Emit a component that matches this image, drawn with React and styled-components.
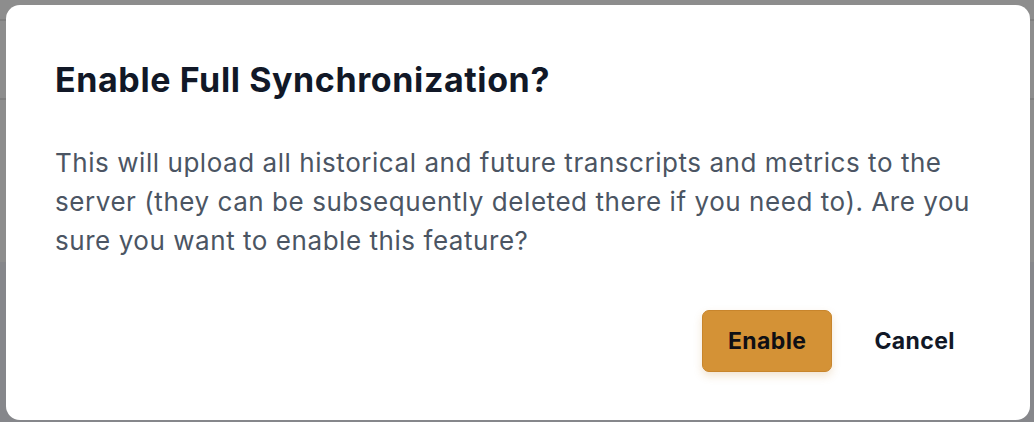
import React from 'react';
import styled, { createGlobalStyle } from 'styled-components';

const GlobalStyle = createGlobalStyle`
  html, body {
    margin: 0;
    padding: 0;
    width: 1034px;
    height: 422px;
    overflow: hidden;
    font-family: Inter, "Noto Sans", "Liberation Sans", sans-serif;
  }
`;

const Screen = styled.div`
  position: relative;
  width: 1034px;
  height: 422px;
  background: #8d8d8d;
  overflow: hidden;
`;

// faint app shapes visible behind the overlay
const BackdropApp = styled.div`
  position: absolute;
  inset: 0;
  display: flex;
  flex-direction: column;
`;

const BackdropBar = styled.div`
  height: ${props => props.h}px;
  border-bottom: 2px solid #7f7f7f;
  flex-shrink: 0;
`;

const BackdropFoot = styled.div`
  margin-top: auto;
  height: 160px;
  background: #86878b;
`;

const Dialog = styled.div`
  position: absolute;
  left: 6px;
  top: 5px;
  width: 1024px;
  height: 415px;
  box-sizing: border-box;
  background: #ffffff;
  border-radius: 14px;
  padding: 54px 49px 0 49px;
  display: flex;
  flex-direction: column;
`;

const Title = styled.h2`
  margin: 0;
  font-size: 34px;
  line-height: 42px;
  font-weight: 700;
  color: #111827;
  letter-spacing: 0.6px;
`;

const Body = styled.p`
  margin: 42px 0 0;
  font-size: 26px;
  line-height: 39px;
  font-weight: 400;
  color: #4b5563;
  letter-spacing: 0.55px;
  max-width: 945px;
`;

const Actions = styled.div`
  display: flex;
  justify-content: flex-end;
  align-items: center;
  gap: 16px;
  margin-top: 50px;
`;

const Button = styled.button`
  font-family: inherit;
  font-size: 23px;
  font-weight: 700;
  letter-spacing: 0.4px;
  height: 62px;
  padding: 0 25px;
  border-radius: 7px;
  cursor: pointer;
  color: ${props => (props.primary ? '#0f0f14' : '#111827')};
  background: ${props => (props.primary ? '#d49236' : 'transparent')};
  border: 1px solid ${props => (props.primary ? '#c8852c' : 'transparent')};
  box-shadow: ${props => (props.primary ? '0 4px 8px rgba(190, 130, 50, 0.22)' : 'none')};
`;

export default function App() {
  return (
    <Screen>
      <GlobalStyle />
      <BackdropApp>
        <BackdropBar h={19} />
        <BackdropBar h={77} />
        <BackdropFoot />
      </BackdropApp>
      <Dialog role="dialog" aria-modal="true">
        <Title>Enable Full Synchronization?</Title>
        <Body>
          This will upload all historical and future transcripts and metrics to the
          server (they can be subsequently deleted there if you need to). Are you
          sure you want to enable this feature?
        </Body>
        <Actions>
          <Button primary>Enable</Button>
          <Button>Cancel</Button>
        </Actions>
      </Dialog>
    </Screen>
  );
}
